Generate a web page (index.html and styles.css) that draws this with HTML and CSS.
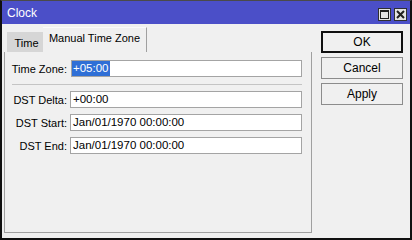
FILE: index.html
```html
<!DOCTYPE html>
<html lang="en">
<head>
  <meta charset="UTF-8">
  <title>Clock</title>
  <link rel="stylesheet" href="styles.css">
</head>
<body>
  <div class="window">
    <div class="titlebar">
      <span class="title">Clock</span>
      <div class="title-btns">
        <span class="tbtn">
          <svg width="11" height="11" viewBox="0 0 11 11"><rect x="1.5" y="1.5" width="8" height="8" fill="none" stroke="#202020" stroke-width="1"/><rect x="1" y="1" width="9" height="2" fill="#202020"/></svg>
        </span>
        <span class="tbtn">
          <svg width="11" height="11" viewBox="0 0 11 11"><path d="M2 2 L9 9 M9 2 L2 9" stroke="#202020" stroke-width="2"/></svg>
        </span>
      </div>
    </div>

    <div class="content">
      <div class="main">
        <div class="tabs">
          <div class="tab">Time</div>
          <div class="tab active">Manual Time Zone</div>
        </div>
        <div class="panel">
          <div class="row">
            <label>Time Zone:</label>
            <div class="field tz"><span class="sel">+05:00</span></div>
          </div>
          <div class="sep"></div>
          <div class="row">
            <label>DST Delta:</label>
            <div class="field">+00:00</div>
          </div>
          <div class="row">
            <label>DST Start:</label>
            <div class="field">Jan/01/1970 00:00:00</div>
          </div>
          <div class="row">
            <label>DST End:</label>
            <div class="field">Jan/01/1970 00:00:00</div>
          </div>
        </div>
      </div>

      <div class="actions">
        <button class="btn default">OK</button>
        <button class="btn">Cancel</button>
        <button class="btn">Apply</button>
      </div>
    </div>
  </div>
</body>
</html>
```

FILE: styles.css
```css
* {
  margin: 0;
  padding: 0;
  box-sizing: border-box;
}

body {
  width: 412px;
  height: 240px;
  font-family: "Liberation Sans", Arial, sans-serif;
  font-size: 11px;
  color: #000;
  background: #f0f0f0;
}

.window {
  width: 412px;
  height: 240px;
  background: #f0f0f0;
  border: 2px solid #101010;
  border-top: 1px solid #4a4a4a;
  display: flex;
  flex-direction: column;
}

.titlebar {
  height: 23px;
  background: #4b4fc8;
  display: flex;
  align-items: center;
  padding-left: 5px;
}

.title {
  color: #fff;
  font-size: 12px;
  flex: 1;
}

.title-btns {
  display: flex;
  gap: 3px;
  margin-right: 3px;
  margin-top: 4px;
}

.tbtn {
  width: 13px;
  height: 13px;
  border: 1px solid #303030;
  background: #e4e4e4;
  display: flex;
  align-items: center;
  justify-content: center;
}

.content {
  flex: 1;
  display: flex;
}

.main {
  width: 308px;
  margin-left: 2px;
  margin-top: 3px;
  display: flex;
  flex-direction: column;
}

.tabs {
  height: 25px;
  display: flex;
  align-items: flex-end;
  padding-left: 3px;
}

.tab {
  height: 20px;
  width: 36px;
  background: #d6d6d6;
  display: flex;
  align-items: center;
  justify-content: center;
  padding: 2px 0 0 3px;
}

.tab.active {
  height: 25px;
  width: 104px;
  background: #f0f0f0;
  border-top: 1px solid #fafafa;
  border-right: 1px solid #a0a0a0;
  padding: 0 0 4px 0;
}

.panel {
  height: 181px;
  border-left: 1px solid #a0a0a0;
  border-right: 1px solid #a0a0a0;
  border-bottom: 1px solid #a0a0a0;
  padding: 8px 9px 0 0;
  display: flex;
  flex-direction: column;
  gap: 6px;
}

.row {
  height: 17px;
  display: flex;
  align-items: center;
  gap: 3px;
}

.row label {
  width: 62px;
  text-align: right;
}

.field {
  flex: 1;
  height: 17px;
  background: #fff;
  border: 1px solid #a4a4a4;
  padding-left: 2px;
  line-height: 15px;
  font-size: 11.5px;
}

.field.tz {
  margin-left: 1px;
  padding-left: 0;
}

.sel {
  display: inline-block;
  height: 15px;
  padding: 0 1px;
  background: #2f6fd6;
  color: #fff;
}

.sep {
  height: 1px;
  margin: 1px 0 0 7px;
  background: #c4c4c4;
}

.actions {
  width: 82px;
  margin-left: 9px;
  margin-top: 7px;
  display: flex;
  flex-direction: column;
  gap: 4px;
}

.btn {
  height: 22px;
  font-family: inherit;
  font-size: 12px;
  color: #000;
  background: #f0f0f0;
  border: 1px solid #8c8c8c;
}

.btn.default {
  border: 2px solid #101010;
}
```
